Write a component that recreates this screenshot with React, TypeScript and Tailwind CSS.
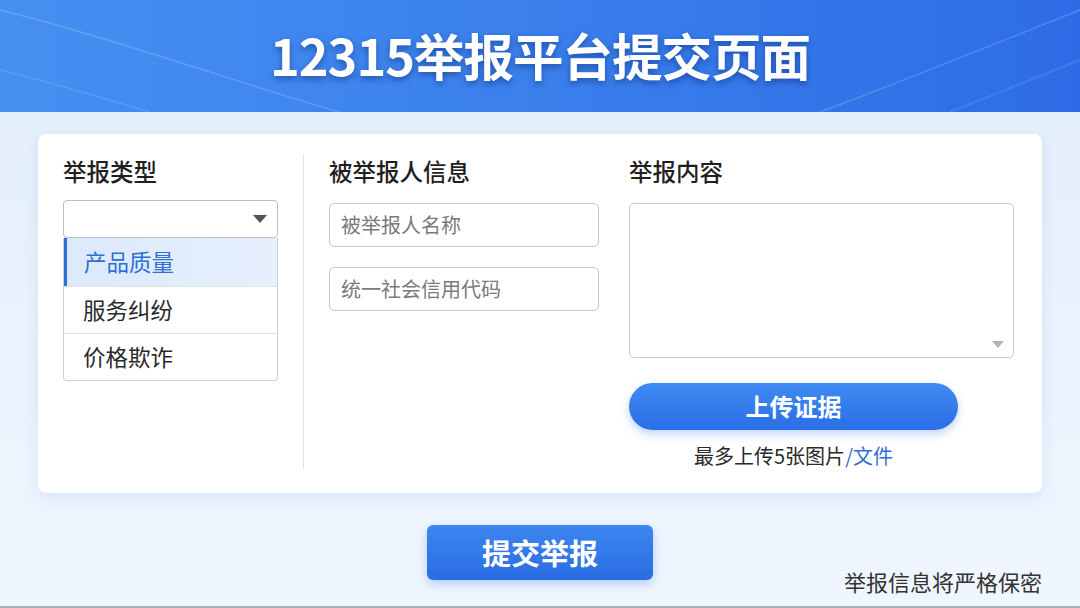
import React from "react";

const font = { fontFamily: '"Noto Sans CJK SC", "Noto Sans", sans-serif' };

function Header() {
  return (
    <header className="relative h-[112px] overflow-hidden bg-gradient-to-r from-[#4690f1] via-[#3a7fec] to-[#2d6ce6] flex items-center justify-center">
      {/* faint decorative arcs */}
      <svg className="absolute inset-0" width="1080" height="112" viewBox="0 0 1080 112" fill="none">
        <path d="M0 10 C 120 40, 260 90, 340 112" stroke="white" strokeOpacity="0.18" strokeWidth="1.5" />
        <path d="M0 70 C 60 85, 110 100, 150 112" stroke="white" strokeOpacity="0.12" strokeWidth="1.5" />
        <path d="M1080 10 C 980 50, 880 90, 820 112" stroke="white" strokeOpacity="0.18" strokeWidth="1.5" />
        <path d="M1080 60 C 1030 80, 980 100, 950 112" stroke="white" strokeOpacity="0.12" strokeWidth="1.5" />
      </svg>
      <h1 className="relative text-white text-[50.5px] font-bold tracking-[-1px] leading-none [text-shadow:0_3px_6px_rgba(0,30,90,0.45)] mb-[4px]">
        12315举报平台提交页面
      </h1>
    </header>
  );
}

function TypeColumn() {
  const options = ["产品质量", "服务纠纷", "价格欺诈"];
  return (
    <div className="w-[215px] shrink-0">
      <h2 className="text-[23.5px] font-medium text-[#1f1f1f] leading-none">举报类型</h2>
      <div className="mt-[16px] h-[38px] border border-[#bdbdbd] rounded-[4px] flex items-center justify-end pr-[9px] bg-white">
        <svg width="16" height="10" viewBox="0 0 16 10">
          <path d="M1 1 L15 1 L8 9 Z" fill="#555" />
        </svg>
      </div>
      <ul className="border border-[#cfcfcf] border-t-0 rounded-b-[4px] overflow-hidden bg-white">
        {options.map((o, i) => (
          <li
            key={o}
            className={
              i === 0
                ? "h-[48px] flex items-center pl-[17px] text-[22.5px] text-[#2f6fd6] border-l-[3px] border-[#2d6fd6] bg-gradient-to-r from-[#dce9fb] to-[#e6f0fd]"
                : "h-[47px] flex items-center pl-[19px] text-[22.5px] text-[#2a2a2a] border-t border-[#e2e2e2]"
            }
          >
            {o}
          </li>
        ))}
      </ul>
    </div>
  );
}

function TargetColumn() {
  return (
    <div className="w-[270px] shrink-0">
      <h2 className="text-[23.5px] font-medium text-[#1f1f1f] leading-none">被举报人信息</h2>
      <div className="mt-[19px] flex flex-col gap-[20px]">
        {["被举报人名称", "统一社会信用代码"].map((p) => (
          <div
            key={p}
            className="h-[44px] border border-[#c9c9c9] rounded-[5px] flex items-center pl-[11px] text-[20px] text-[#7a7a7a]"
          >
            {p}
          </div>
        ))}
      </div>
    </div>
  );
}

function ContentColumn() {
  return (
    <div className="w-[385px] shrink-0">
      <h2 className="text-[23.5px] font-medium text-[#1f1f1f] leading-none">举报内容</h2>
      <div className="mt-[19px] h-[155px] border border-[#c9c9c9] rounded-[5px] flex items-end justify-end pr-[9px] pb-[9px]">
        <svg width="12" height="7" viewBox="0 0 12 7">
          <path d="M0 0 L12 0 L6 7 Z" fill="#b5b5b5" />
        </svg>
      </div>
      <div className="w-[329px] mt-[25px]">
        <button className="w-full h-[47px] rounded-full bg-gradient-to-b from-[#3f8af3] to-[#2a6ee6] text-white text-[24px] font-bold shadow-[0_4px_10px_rgba(45,110,230,0.3)]">
          上传证据
        </button>
        <p className="mt-[16px] text-center text-[20px] text-[#2a2a2a] leading-none">
          最多上传5张图片<span className="text-[#2f6fd6]">/文件</span>
        </p>
      </div>
    </div>
  );
}

export default function App() {
  return (
    <div style={font} className="w-[1080px] h-[608px] overflow-hidden bg-[#eaf3fd] flex flex-col">
      <Header />
      <main className="flex-1 bg-gradient-to-b from-[#e4effc] to-[#eff6fe] border-b-2 border-[#a9b2b8] flex flex-col">
        <section className="mt-[22px] mx-[38px] h-[359px] bg-white rounded-[8px] shadow-[0_4px_14px_rgba(90,130,190,0.15)] flex pl-[25px] pt-[26px]">
          <TypeColumn />
          <div className="w-px bg-[#e1e1e1] ml-[25px] mr-[25px] mt-[-6px] h-[315px]" />
          <TargetColumn />
          <div className="w-[30px] shrink-0" />
          <ContentColumn />
        </section>
        <div className="mt-[32px] grid grid-cols-[1fr_auto_1fr] px-[38px]">
          <div />
          <button className="w-[226px] h-[55px] rounded-[6px] bg-gradient-to-b from-[#3d86f0] to-[#2a6ce3] text-white text-[29px] font-bold shadow-[0_4px_10px_rgba(45,110,230,0.3)]">
            提交举报
          </button>
          <div className="flex items-end justify-end">
            <span className="text-[22px] text-[#333] leading-none mb-[-12px]">
              举报信息将严格保密
            </span>
          </div>
        </div>
      </main>
    </div>
  );
}
